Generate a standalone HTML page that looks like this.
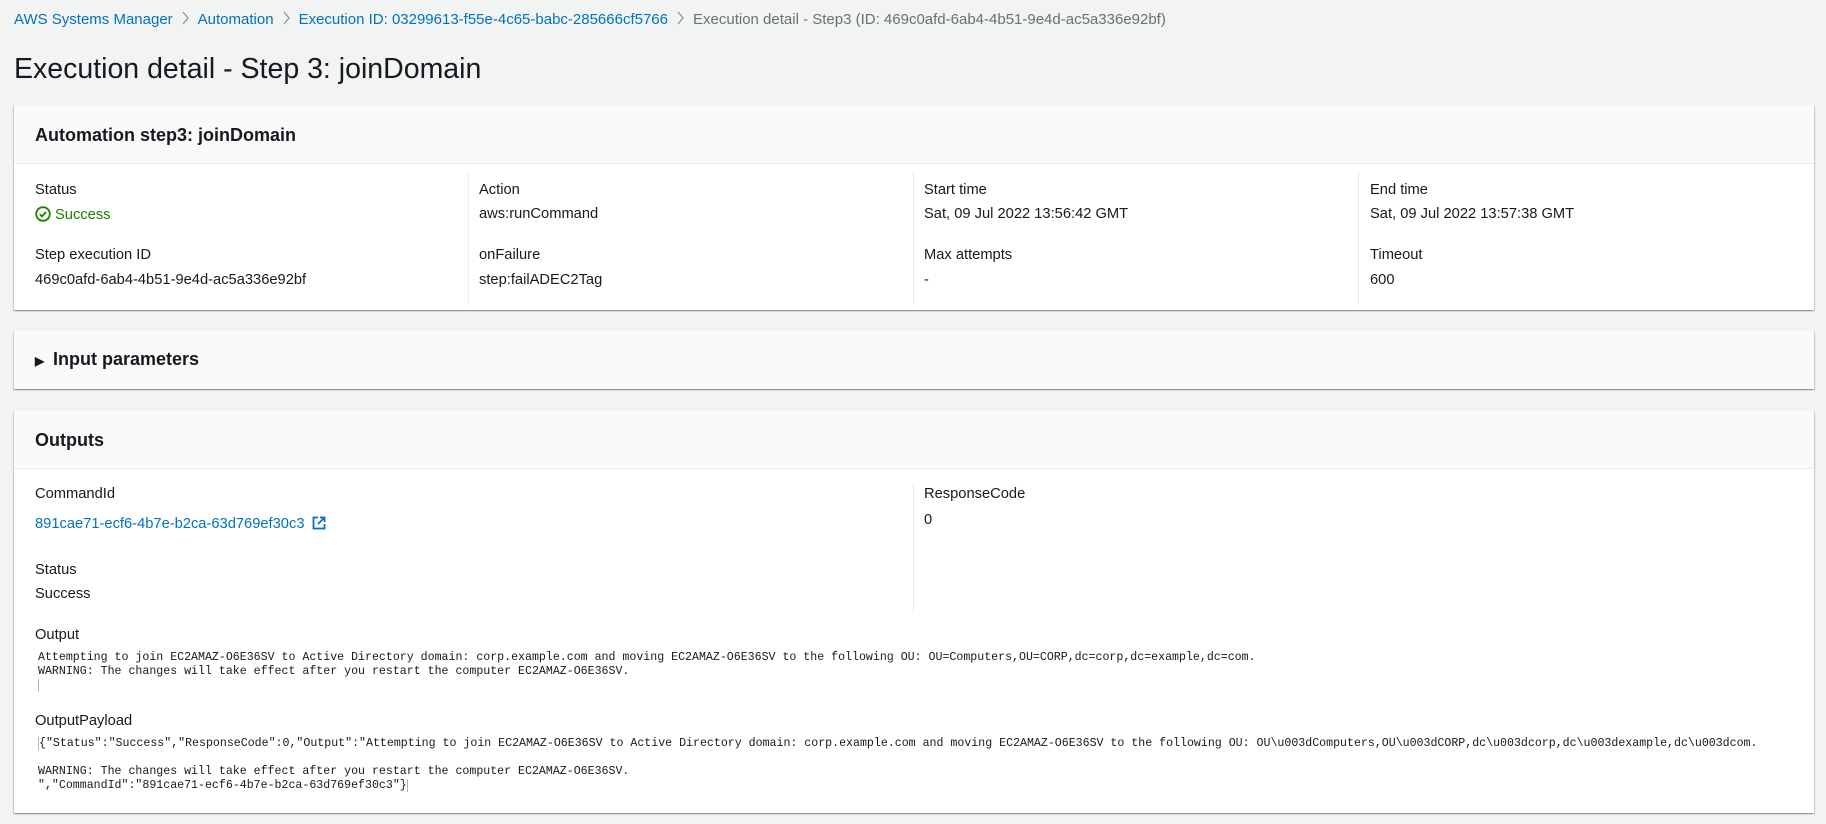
<!DOCTYPE html>
<html><head><meta charset="utf-8"><style>
*{margin:0;padding:0;box-sizing:border-box}
body{width:1826px;height:824px;background:#f2f3f3;font-family:"Liberation Sans",Arial,sans-serif;color:#16191f;position:relative;overflow:hidden;font-size:15px}
.a{position:absolute;white-space:nowrap}
.bc{top:11px;font-size:15px;color:#0073bb}
.sep{display:inline-block;margin:0 8px;vertical-align:-1px}
.panel{position:absolute;left:14px;width:1800px;background:#fff;box-shadow:0 1px 1px 0 rgba(0,28,36,.3),1px 1px 1px 0 rgba(0,28,36,.15),-1px 1px 1px 0 rgba(0,28,36,.15)}
.hd{background:#fafafa;border-bottom:1px solid #eaeded;position:absolute;left:0;right:0;top:0}
.h2{font-weight:bold;font-size:18px}
.lbl{font-size:14.7px}
.vd{position:absolute;width:1px;background:#eaeded}
.mono{font-family:"Liberation Mono",monospace;font-size:11.6px;line-height:14px;white-space:pre;position:absolute;color:#16191f}
</style></head><body>
<div class="a bc" style="left:14px">AWS Systems Manager<svg class="sep" width="9" height="14" viewBox="0 0 9 14"><path d="M2 1l5 6-5 6" fill="none" stroke="#879596" stroke-width="1.3"/></svg>Automation<svg class="sep" width="9" height="14" viewBox="0 0 9 14"><path d="M2 1l5 6-5 6" fill="none" stroke="#879596" stroke-width="1.3"/></svg>Execution ID: 03299613-f55e-4c65-babc-285666cf5766<svg class="sep" width="9" height="14" viewBox="0 0 9 14"><path d="M2 1l5 6-5 6" fill="none" stroke="#879596" stroke-width="1.3"/></svg><span style="color:#687078">Execution detail - Step3 (ID: 469c0afd-6ab4-4b51-9e4d-ac5a336e92bf)</span></div>
<div class="a" style="left:14px;top:53px;font-size:28.5px">Execution detail - Step 3: joinDomain</div>

<div class="panel" style="top:105px;height:205px">
 <div class="hd" style="height:59px"></div>
 <div class="a h2" style="left:21px;top:20px">Automation step3: joinDomain</div>
 <div class="vd" style="left:454px;top:66px;height:134px"></div>
 <div class="vd" style="left:899px;top:66px;height:134px"></div>
 <div class="vd" style="left:1344px;top:66px;height:134px"></div>
 <div class="a lbl" style="left:21px;top:77px">Status</div>
 <div class="a lbl" style="left:21px;top:101px;color:#1d8102"><svg width="16" height="16" viewBox="0 0 16 16" style="vertical-align:-3px;margin-right:4px"><circle cx="8" cy="8" r="6.8" fill="none" stroke="#1d8102" stroke-width="1.8"/><path d="M4.8 8.2l2.2 2.2 4-4.4" fill="none" stroke="#1d8102" stroke-width="1.8"/></svg>Success</div>
 <div class="a lbl" style="left:21px;top:142px">Step execution ID</div>
 <div class="a lbl" style="left:21px;top:167px">469c0afd-6ab4-4b51-9e4d-ac5a336e92bf</div>
 <div class="a lbl" style="left:465px;top:77px">Action</div>
 <div class="a lbl" style="left:465px;top:101px">aws:runCommand</div>
 <div class="a lbl" style="left:465px;top:142px">onFailure</div>
 <div class="a lbl" style="left:465px;top:167px">step:failADEC2Tag</div>
 <div class="a lbl" style="left:910px;top:77px">Start time</div>
 <div class="a lbl" style="left:910px;top:101px">Sat, 09 Jul 2022 13:56:42 GMT</div>
 <div class="a lbl" style="left:910px;top:142px">Max attempts</div>
 <div class="a lbl" style="left:910px;top:167px">-</div>
 <div class="a lbl" style="left:1356px;top:77px">End time</div>
 <div class="a lbl" style="left:1356px;top:101px">Sat, 09 Jul 2022 13:57:38 GMT</div>
 <div class="a lbl" style="left:1356px;top:142px">Timeout</div>
 <div class="a lbl" style="left:1356px;top:167px">600</div>
</div>

<div class="panel" style="top:331px;height:58px;background:#fafafa">
 <div class="a h2" style="left:21px;top:18px"><span style="font-size:12px;display:inline-block;width:18px">&#9654;</span>Input parameters</div>
</div>

<div class="panel" style="top:411px;height:402px">
 <div class="hd" style="height:58px"></div>
 <div class="a h2" style="left:21px;top:19px">Outputs</div>
 <div class="vd" style="left:899px;top:72px;height:131px"></div>
 <div class="a lbl" style="left:21px;top:75px">CommandId</div>
 <div class="a lbl" style="left:21px;top:105px;color:#0073bb">891cae71-ecf6-4b7e-b2ca-63d769ef30c3 <svg width="14" height="14" viewBox="0 0 14 14" style="vertical-align:-2px;margin-left:3px"><path d="M6 1.5H1.5v11h11V8" fill="none" stroke="#0073bb" stroke-width="1.8"/><path d="M8 1.5h4.5V6M12.5 1.5L6 8" fill="none" stroke="#0073bb" stroke-width="1.8"/></svg></div>
 <div class="a lbl" style="left:21px;top:151px">Status</div>
 <div class="a lbl" style="left:21px;top:175px">Success</div>
 <div class="a lbl" style="left:910px;top:75px">ResponseCode</div>
 <div class="a lbl" style="left:910px;top:101px">0</div>
 <div class="a lbl" style="left:21px;top:216px">Output</div>
 <div class="mono" style="left:24px;top:240px">Attempting to join EC2AMAZ-O6E36SV to Active Directory domain: corp.example.com and moving EC2AMAZ-O6E36SV to the following OU: OU=Computers,OU=CORP,dc=corp,dc=example,dc=com.
WARNING: The changes will take effect after you restart the computer EC2AMAZ-O6E36SV.
<span style="border-left:1px solid #aab7b8"> </span></div>
 <div class="a lbl" style="left:21px;top:302px">OutputPayload</div>
 <div class="mono" style="left:24px;top:326px"><span style="border-left:1px solid #aab7b8"></span>{"Status":"Success","ResponseCode":0,"Output":"Attempting to join EC2AMAZ-O6E36SV to Active Directory domain: corp.example.com and moving EC2AMAZ-O6E36SV to the following OU: OU\u003dComputers,OU\u003dCORP,dc\u003dcorp,dc\u003dexample,dc\u003dcom.

WARNING: The changes will take effect after you restart the computer EC2AMAZ-O6E36SV.
","CommandId":"891cae71-ecf6-4b7e-b2ca-63d769ef30c3"}<span style="border-left:1px solid #aab7b8"></span></div>
</div>
</body></html>
